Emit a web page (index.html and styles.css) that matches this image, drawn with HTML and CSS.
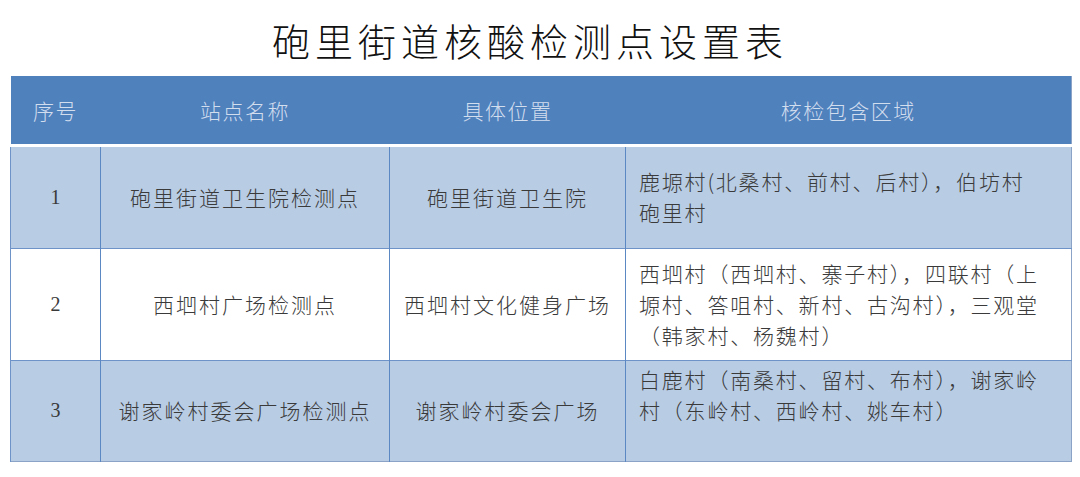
FILE: index.html
```html
<!DOCTYPE html>
<html lang="zh-CN">
<head>
<meta charset="utf-8">
<title>砲里街道核酸检测点设置表</title>
<link rel="stylesheet" href="styles.css">
</head>
<body>
<h1 class="title">砲里街道核酸检测点设置表</h1>
<table class="sheet">
  <colgroup>
    <col class="c-num">
    <col class="c-name">
    <col class="c-loc">
    <col class="c-area">
  </colgroup>
  <thead>
    <tr class="head">
      <th>序号</th>
      <th>站点名称</th>
      <th>具体位置</th>
      <th>核检包含区域</th>
    </tr>
  </thead>
  <tbody>
    <tr class="row r1 shade">
      <td class="num">1</td>
      <td>砲里街道卫生院检测点</td>
      <td>砲里街道卫生院</td>
      <td class="area">鹿塬村(北桑村、前村、后村），伯坊村<br>砲里村</td>
    </tr>
    <tr class="row r2">
      <td class="num">2</td>
      <td>西垇村广场检测点</td>
      <td>西垇村文化健身广场</td>
      <td class="area">西垇村（西垇村、寨子村），四联村（上<br>塬村、答咀村、新村、古沟村），三观堂<br>（韩家村、杨魏村）</td>
    </tr>
    <tr class="row r3 shade">
      <td class="num">3</td>
      <td>谢家岭村委会广场检测点</td>
      <td>谢家岭村委会广场</td>
      <td class="area">白鹿村（南桑村、留村、布村），谢家岭<br>村（东岭村、西岭村、姚车村）<br>&nbsp;</td>
    </tr>
  </tbody>
</table>
</body>
</html>
```
FILE: styles.css
```css
html, body {
  margin: 0;
  padding: 0;
  background: #ffffff;
}

body {
  width: 1080px;
  height: 477px;
  overflow: hidden;
  font-family: "Noto Sans CJK SC", "Noto Sans", sans-serif;
}

.title {
  margin: 0;
  padding: 21px 20px 0 0;
  height: 38px;
  line-height: 38px;
  font-size: 38px;
  font-weight: 300;
  letter-spacing: 5px;
  color: #111111;
  text-align: center;
}

.sheet {
  margin: 17px 0 0 10px;
  width: 1061px;
  table-layout: fixed;
  border-collapse: collapse;
  border-right: 1px solid #8aa3c7;
  border-bottom: 1px solid #8aa3c7;
}

.c-num { width: 90px; }
.c-name { width: 289px; }
.c-loc { width: 236px; }
.c-area { width: 446px; }

.head {
  height: 69px;
}

.head th {
  background: #4f81bd;
  color: #d2ddee;
  font-size: 21px;
  font-weight: 300;
  letter-spacing: 1.5px;
  text-align: center;
  vertical-align: middle;
  padding: 0;
  border-bottom: 3px solid #ffffff;
}

.row td {
  font-size: 21px;
  font-weight: 300;
  letter-spacing: 2px;
  color: #3a3a3a;
  text-align: center;
  vertical-align: middle;
  padding: 0 4px;
  border-left: 1.5px solid #5b87c2;
  border-top: 1px solid #6d93c8;
  line-height: 31px;
}

.row.shade td {
  background: #b8cce4;
}

.r1 { height: 103px; }
.r2 { height: 112px; }
.r3 { height: 101px; }

.row td.num {
  font-family: "Liberation Serif", serif;
  font-size: 20px;
  letter-spacing: 0;
  border-left: 1px solid #6d93c8;
}

.row td.area {
  text-align: left;
  padding: 0 12px 0 13px;
  letter-spacing: 1.8px;
}
```
